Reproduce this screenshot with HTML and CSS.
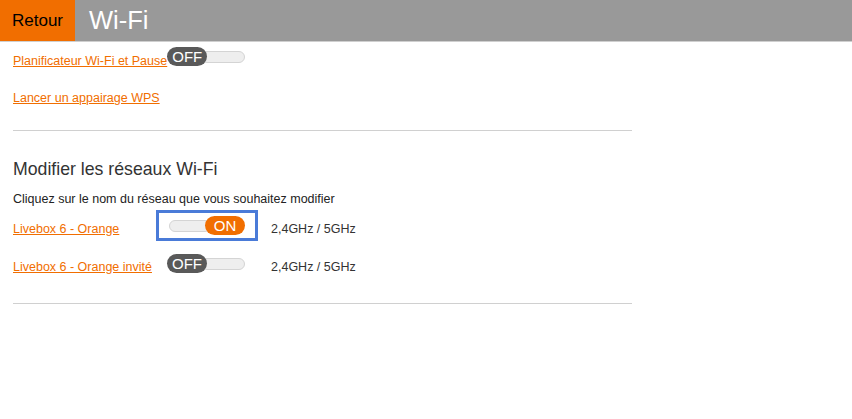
FILE: index.html
```html
<!DOCTYPE html>
<html lang="fr">

<head>
  <meta charset="UTF-8">
  <meta name="viewport" content="width=device-width, initial-scale=1.0">
  <title>Wi-Fi</title>

  <link rel="stylesheet" href="styles.css">
</head>

<body>
  <header class="topbar">
    <a class="back" href="#">Retour</a>
    <h1>Wi-Fi</h1>
  </header>

  <main class="content">
    <div class="scheduler">
      <a href="#">Planificateur Wi-Fi et Pause</a>
      <span class="toggle">
        <span class="knob">OFF</span>
        <span class="track"></span>
      </span>
    </div>

    <p class="wps"><a href="#">Lancer un appairage WPS</a></p>

    <hr>

    <h2>Modifier les réseaux Wi-Fi</h2>
    <p class="hint">Cliquez sur le nom du réseau que vous souhaitez modifier</p>

    <div class="networks">
      <a href="#">Livebox 6 - Orange</a>
      <span class="switch-cell">
        <span class="focus">
          <span class="toggle on">
            <span class="knob">ON</span>
            <span class="track"></span>
          </span>
        </span>
      </span>
      <span class="band">2,4GHz / 5GHz</span>

      <a href="#">Livebox 6 - Orange invité</a>
      <span class="switch-cell">
        <span class="toggle">
          <span class="knob">OFF</span>
          <span class="track"></span>
        </span>
      </span>
      <span class="band">2,4GHz / 5GHz</span>
    </div>

    <hr class="bottom">
  </main>
</body>

</html>
```

FILE: styles.css
```css
body {
  margin: 0;
  font-family: "Liberation Sans", Arial, sans-serif;
  color: #222;
}

.topbar {
  display: flex;
  align-items: center;
  height: 41px;
  background-color: #999;
  border-bottom: 1px solid #cfcfcf;
}

.back {
  display: flex;
  align-items: center;
  align-self: stretch;
  width: 63px;
  padding: 1px 0 0 12px;
  background-color: #f16e00;
  color: #000;
  font-size: 17px;
  text-decoration: none;
}

.topbar h1 {
  margin: 0 0 0 14px;
  color: #fff;
  font-size: 25.5px;
  font-weight: normal;
}

.content {
  width: 619px;
  padding: 0 13px;
  font-size: 12.5px;
  line-height: 15px;
}

.content a {
  color: #f16e00;
}

.scheduler {
  display: flex;
  align-items: flex-end;
  margin-top: 5px;
}

.scheduler a {
  margin-bottom: -3px;
}

.wps {
  margin: 25px 0 0;
}

hr {
  margin: 24px 0 0;
  border: 0;
  border-top: 1px solid #d0d0d0;
}

h2 {
  margin: 28px 0 0;
  font-size: 17.7px;
  line-height: 21px;
  font-weight: normal;
  color: #333;
}

.hint {
  margin: 12px 0 0;
}

.networks {
  display: grid;
  grid-template-columns: 154px 104px auto;
  grid-auto-rows: 38px;
  align-items: center;
  margin-top: 3px;
}

.switch-cell {
  display: flex;
  margin-bottom: 7px;
}

.band {
  color: #333;
}

.toggle {
  display: inline-flex;
  align-items: center;
  width: 78px;
  height: 19px;
}

.toggle.on {
  flex-direction: row-reverse;
}

.knob {
  position: relative;
  z-index: 1;
  width: 40px;
  height: 19px;
  border-radius: 10px;
  background-color: #595959;
  color: #fff;
  font-size: 15px;
  line-height: 19px;
  text-align: center;
}

.toggle.on .knob {
  background-color: #f16e00;
}

.track {
  flex: 1;
  height: 10px;
  margin-left: -6px;
  border: 1px solid #d4d4d4;
  border-radius: 6px;
  background-color: #eee;
}

.toggle.on .track {
  margin: 0 -6px 0 2px;
}

.focus {
  display: inline-flex;
  margin: -6px 0 -6px -11px;
  padding: 3px 10px 3px 8px;
  border: 3px solid #4a7bd8;
}

.bottom {
  margin-top: 17px;
}
```
